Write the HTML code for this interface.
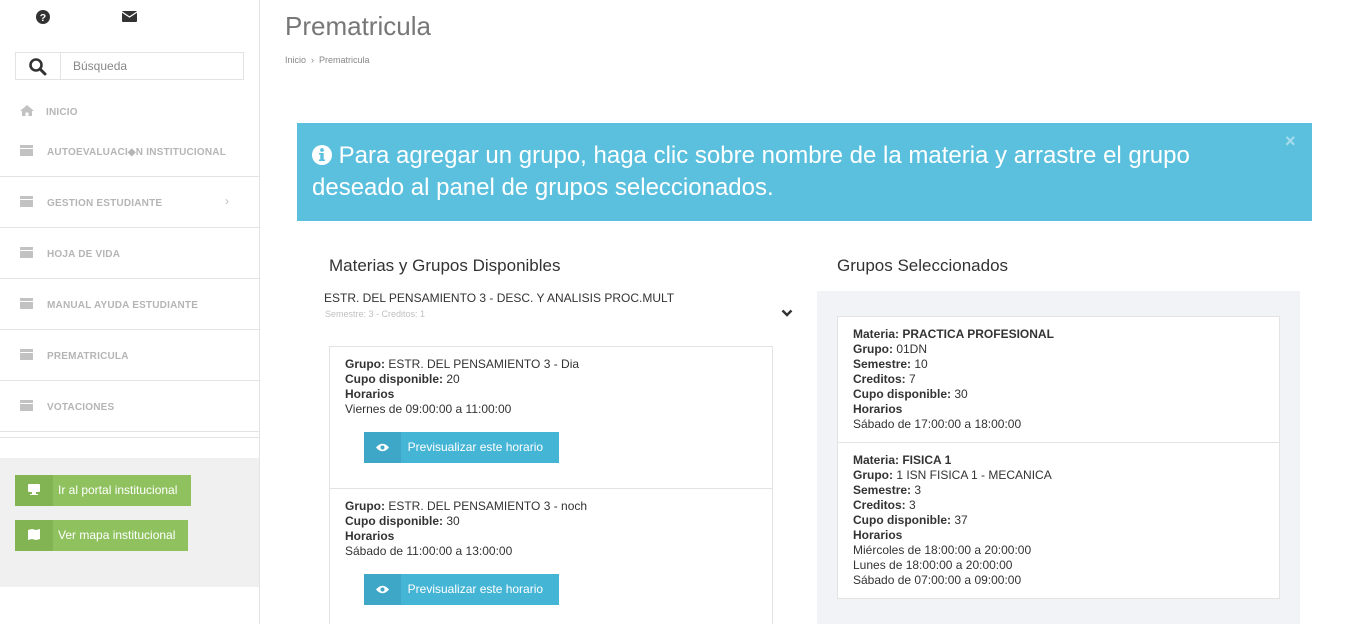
<!DOCTYPE html>
<html><head><meta charset="utf-8"><style>
*{margin:0;padding:0;box-sizing:border-box}
html,body{width:1348px;height:624px;overflow:hidden}
body{background:#fff;font-family:"Liberation Sans",Arial,sans-serif;color:#333;position:relative}
.a{position:absolute}
.side{left:0;top:0;width:260px;height:624px;border-right:1px solid #e3e3e3}
.mi{position:absolute;left:20px;font-size:10px;font-weight:bold;color:#b5b5b5;letter-spacing:.2px}
.mi i{display:inline-block;width:13px;height:11px;background:#c2c2c2;vertical-align:-1px;margin-right:14px;border-top:3px solid #c2c2c2;box-shadow:inset 0 1px 0 #fff}
.hr{position:absolute;left:0;width:259px;height:1px;background:#e3e3e3}
.gb{position:absolute;left:15px;height:31px;background:#8fc25f;color:#fff;font-size:12px;line-height:31px}
.gb span{display:inline-block;width:38px;height:31px;background:#82b453;text-align:center;vertical-align:top}
.t{font-size:12px;line-height:15px;color:#333}
.bt{position:absolute;left:35px;width:195px;height:31px;background:#45b5d6;color:#fff;font-size:12px;line-height:31px}
.bt span{display:inline-block;width:37px;height:31px;background:#3ea7c7;vertical-align:top;text-align:center}
</style></head><body>
<div class="a side">
  <svg class="a" style="left:36px;top:10px" width="14" height="14" viewBox="0 0 16 16"><circle cx="8" cy="8" r="8" fill="#333"/><text x="8" y="12.5" font-size="12" font-weight="bold" fill="#fff" text-anchor="middle" font-family="Liberation Sans">?</text></svg>
  <svg class="a" style="left:122px;top:11px" width="15" height="11" viewBox="0 0 15 11"><rect width="15" height="11" rx="1" fill="#333"/><path d="M0 1 L7.5 6 L15 1" stroke="#fff" stroke-width="1.2" fill="none"/></svg>
  <div class="a" style="left:15px;top:52px;width:229px;height:28px;border:1px solid #e3e3e3"></div>
  <div class="a" style="left:60px;top:52px;width:1px;height:28px;background:#e3e3e3"></div>
  <svg class="a" style="left:28px;top:57px" width="19" height="19" viewBox="0 0 19 19"><circle cx="8" cy="8" r="5.5" stroke="#333" stroke-width="2.6" fill="none"/><path d="M12 12 L17 17" stroke="#333" stroke-width="3" stroke-linecap="round"/></svg>
  <div class="a" style="left:73px;top:59px;font-size:12px;color:#888">Búsqueda</div>
  <div class="mi" style="top:105px"><svg width="14" height="11" viewBox="0 0 14 11" style="margin-right:12px;vertical-align:-1px"><path d="M7 0 L14 6 L12 6 L12 11 L8.5 11 L8.5 7.5 L5.5 7.5 L5.5 11 L2 11 L2 6 L0 6Z" fill="#c2c2c2"/></svg>INICIO</div>
  <div class="mi" style="top:145px"><i></i>AUTOEVALUACI◆N INSTITUCIONAL</div>
  <div class="hr" style="top:176px"></div>
  <div class="mi" style="top:196px"><i></i>GESTION ESTUDIANTE</div>
  <div class="a" style="left:225px;top:194px;color:#bbb;font-size:12px">›</div>
  <div class="hr" style="top:227px"></div>
  <div class="mi" style="top:247px"><i></i>HOJA DE VIDA</div>
  <div class="hr" style="top:278px"></div>
  <div class="mi" style="top:298px"><i></i>MANUAL AYUDA ESTUDIANTE</div>
  <div class="hr" style="top:329px"></div>
  <div class="mi" style="top:349px"><i></i>PREMATRICULA</div>
  <div class="hr" style="top:380px"></div>
  <div class="mi" style="top:400px"><i></i>VOTACIONES</div>
  <div class="hr" style="top:431px"></div>
  <div class="hr" style="top:437px"></div>
  <div class="a" style="left:0;top:458px;width:259px;height:129px;background:#f0f0f0"></div>
  <div class="gb" style="top:475px;width:176px"><span><svg width="12" height="11" viewBox="0 0 12 11" style="vertical-align:-1px"><rect x="0" y="0" width="12" height="8" rx="1" fill="#fff"/><rect x="4" y="8" width="4" height="2" fill="#fff"/><rect x="2" y="10" width="8" height="1" fill="#fff"/></svg></span><span style="background:none;width:auto;padding-left:5px">Ir al portal institucional</span></div>
  <div class="gb" style="top:520px;width:173px"><span><svg width="12" height="11" viewBox="0 0 12 11" style="vertical-align:-1px"><path d="M0 1 L4 0 L8 1 L12 0 L12 10 L8 11 L4 10 L0 11Z" fill="#fff"/></svg></span><span style="background:none;width:auto;padding-left:5px">Ver mapa institucional</span></div>
</div>

<div class="a" style="left:285px;top:11px;font-size:26px;color:#777">Prematricula</div>
<div class="a" style="left:285px;top:55px;font-size:9px;color:#888">Inicio &nbsp;›&nbsp; Prematricula</div>

<div class="a" style="left:297px;top:123px;width:1015px;height:98px;background:#5bc0de"></div>
<div class="a" style="left:312px;top:140px;width:960px;font-size:24px;line-height:32px;color:#fff;white-space:nowrap"><svg width="20" height="20" viewBox="0 0 20 20" style="vertical-align:-2px"><circle cx="10" cy="10" r="10" fill="#fff"/><rect x="8.3" y="8" width="3.4" height="8" fill="#5bc0de"/><rect x="7" y="8" width="4" height="1.5" fill="#5bc0de"/><rect x="7" y="14.5" width="6" height="1.5" fill="#5bc0de"/><circle cx="10" cy="5" r="1.9" fill="#5bc0de"/></svg> Para agregar un grupo, haga clic sobre nombre de la materia y arrastre el grupo<br>deseado al panel de grupos seleccionados.</div>
<div class="a" style="left:1285px;top:131px;color:#a9dcec;font-size:18px;font-weight:bold">×</div>

<div class="a" style="left:329px;top:256px;font-size:17px;color:#333">Materias y Grupos Disponibles</div>
<div class="a" style="left:837px;top:256px;font-size:17px;color:#333">Grupos Seleccionados</div>

<div class="a t" style="left:324px;top:291px">ESTR. DEL PENSAMIENTO 3 - DESC. Y ANALISIS PROC.MULT</div>
<div class="a" style="left:325px;top:309px;font-size:9px;color:#c0c0c0">Semestre: 3 - Creditos: 1</div>
<svg class="a" style="left:781px;top:309px" width="12" height="9" viewBox="0 0 12 9"><path d="M1.5 1.5 L6 6 L10.5 1.5" stroke="#333" stroke-width="2.4" fill="none"/></svg>

<div class="a" style="left:329px;top:346px;width:444px;height:290px;border:1px solid #e3e3e3"></div>
<div class="a" style="left:329px;top:488px;width:444px;height:1px;background:#e3e3e3"></div>
<div class="a t" style="left:345px;top:357px"><b>Grupo:</b> ESTR. DEL PENSAMIENTO 3 - Dia<br><b>Cupo disponible:</b> 20<br><b>Horarios</b><br>Viernes de 09:00:00 a 11:00:00</div>
<div class="bt" style="left:364px;top:432px"><span><svg width="13" height="9" viewBox="0 0 13 9" style="vertical-align:-1px"><path d="M0 4.5 Q6.5 -3 13 4.5 Q6.5 12 0 4.5Z" fill="#fff"/><circle cx="6.5" cy="4.5" r="2" fill="#3ea7c7"/></svg></span>&nbsp;&nbsp;Previsualizar este horario</div>
<div class="a t" style="left:345px;top:499px"><b>Grupo:</b> ESTR. DEL PENSAMIENTO 3 - noch<br><b>Cupo disponible:</b> 30<br><b>Horarios</b><br>Sábado de 11:00:00 a 13:00:00</div>
<div class="bt" style="left:364px;top:574px"><span><svg width="13" height="9" viewBox="0 0 13 9" style="vertical-align:-1px"><path d="M0 4.5 Q6.5 -3 13 4.5 Q6.5 12 0 4.5Z" fill="#fff"/><circle cx="6.5" cy="4.5" r="2" fill="#3ea7c7"/></svg></span>&nbsp;&nbsp;Previsualizar este horario</div>

<div class="a" style="left:817px;top:291px;width:483px;height:333px;background:#f2f3f6"></div>
<div class="a" style="left:837px;top:316px;width:443px;height:283px;background:#fff;border:1px solid #e3e3e3"></div>
<div class="a" style="left:837px;top:442px;width:443px;height:1px;background:#e3e3e3"></div>
<div class="a t" style="left:853px;top:327px"><b>Materia: PRACTICA PROFESIONAL</b><br><b>Grupo:</b> 01DN<br><b>Semestre:</b> 10<br><b>Creditos:</b> 7<br><b>Cupo disponible:</b> 30<br><b>Horarios</b><br>Sábado de 17:00:00 a 18:00:00</div>
<div class="a t" style="left:853px;top:453px"><b>Materia: FISICA 1</b><br><b>Grupo:</b> 1 ISN FISICA 1 - MECANICA<br><b>Semestre:</b> 3<br><b>Creditos:</b> 3<br><b>Cupo disponible:</b> 37<br><b>Horarios</b><br>Miércoles de 18:00:00 a 20:00:00<br>Lunes de 18:00:00 a 20:00:00<br>Sábado de 07:00:00 a 09:00:00</div>
</body></html>
